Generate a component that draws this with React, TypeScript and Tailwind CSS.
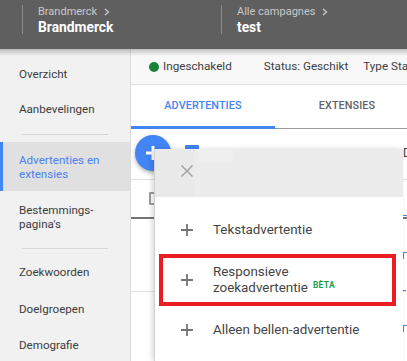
import React from "react";

const Plus = () => (
  <svg width="12" height="12" viewBox="0 0 12 12" className="shrink-0">
    <path d="M6 0V12M0 6H12" stroke="#757575" strokeWidth="1.8" />
  </svg>
);

const NavItem = ({ children, h }: { children: React.ReactNode; h: string }) => (
  <div className={`flex items-center pl-[19px] text-[11.6px] leading-[14px] text-[#3c3c3c] ${h}`}>{children}</div>
);

export default function App() {
  return (
    <div className="relative w-[407px] h-[361px] overflow-hidden bg-white font-['Roboto',sans-serif]">
      {/* Top header */}
      <div className="flex h-[49px] bg-[#5f5f5f]">
        <div className="mt-[5px] ml-[22px] h-[29px] w-px bg-[#8b8b8b]" />
        <div className="ml-[15px] mt-[5px] flex w-[183px] flex-col">
          <div className="flex items-center gap-[7px] text-[11px] leading-[13px] text-[#c9c9c9]">
            Brandmerck
            <svg width="6" height="8" viewBox="0 0 6 8"><path d="M1 1L4.5 4L1 7" stroke="#c9c9c9" strokeWidth="1.3" fill="none" /></svg>
          </div>
          <div className="mt-[1px] text-[13.8px] font-bold leading-[17px] text-white">Brandmerck</div>
        </div>
        <div className="mt-[5px] h-[29px] w-px bg-[#8b8b8b]" />
        <div className="ml-[15px] mt-[5px] flex flex-col">
          <div className="flex items-center gap-[7px] text-[11px] leading-[13px] text-[#c9c9c9]">
            Alle campagnes
            <svg width="6" height="8" viewBox="0 0 6 8"><path d="M1 1L4.5 4L1 7" stroke="#c9c9c9" strokeWidth="1.3" fill="none" /></svg>
          </div>
          <div className="mt-[1px] text-[13.8px] font-bold leading-[17px] text-white">test</div>
        </div>
      </div>

      <div className="flex h-[312px]">
        {/* Sidebar */}
        <div className="w-[131px] shrink-0 border-r border-[#dcdcdc] bg-[#f1f1f1] pt-[7px]">
          <NavItem h="h-[35px]">Overzicht</NavItem>
          <NavItem h="h-[35px]">Aanbevelingen</NavItem>
          <div className="ml-[22px] mt-[8px] h-px w-[86px] bg-[#d6d6d6]" />
          <div className="mt-[7px] flex h-[49px] items-center bg-[#e0e0e0]">
            <div className="h-full w-[3px] bg-[#4285f4]" />
            <div className="pl-[16px] text-[11.6px] leading-[14px] text-[#4a80f0]">
              Advertenties en
              <br />
              extensies
            </div>
          </div>
          <NavItem h="h-[51px]">
            <span>
              Bestemmings-
              <br />
              pagina's
            </span>
          </NavItem>
          <div className="ml-[22px] mt-[6px] h-px w-[86px] bg-[#d6d6d6]" />
          <div className="mt-[5px]" />
          <NavItem h="h-[36px]">Zoekwoorden</NavItem>
          <NavItem h="h-[37px]">Doelgroepen</NavItem>
          <NavItem h="h-[36px]">Demografie</NavItem>
        </div>

        {/* Main */}
        <div className="flex min-w-0 flex-1 flex-col overflow-hidden">
          <div className="flex h-[36px] shrink-0 items-center whitespace-nowrap border-b border-[#e0e0e0] bg-[#f8f8f8] text-[11.7px] text-[#3c4043]">
            <div className="ml-[18px] h-[10px] w-[10px] shrink-0 rounded-full bg-[#188038]" />
            <span className="ml-[4px] shrink-0">Ingeschakeld</span>
            <span className="ml-[32px] shrink-0">Status: Geschikt</span>
            <span className="ml-[15px] shrink-0">Type Status</span>
          </div>
          <div className="relative flex h-[44px] shrink-0 border-b border-[#9a9a9a] text-[10.8px] font-medium tracking-[0.1px]">
            <div className="relative flex w-[144px] shrink-0 items-center justify-center text-[#4285f4]">
              ADVERTENTIES
              <div className="absolute bottom-[-1px] left-0 h-[3px] w-full bg-[#4285f4]" />
            </div>
            <div className="flex w-[144px] shrink-0 items-center justify-center text-[#5f6368]">EXTENSIES</div>
          </div>
          {/* toolbar */}
          <div className="flex h-[51px] shrink-0 items-start whitespace-nowrap border-b border-[#e0e0e0]">
            <div className="ml-[4px] mt-[6px] flex h-[36px] w-[36px] shrink-0 items-center justify-center rounded-full bg-[#4285f4] shadow-[0_2px_4px_rgba(0,0,0,0.3)]">
              <svg width="14" height="14" viewBox="0 0 14 14"><path d="M7 0V14M0 7H14" stroke="white" strokeWidth="3" /></svg>
            </div>
            <div className="ml-[14px] mt-[16px] h-[14px] w-[14px] shrink-0 rounded-[1px] bg-[#4285f4]" />
            <span className="ml-[204px] mt-[15px] shrink-0 text-[12px] text-[#3c4043]">Do</span>
          </div>
          {/* table header */}
          <div className="flex h-[39px] shrink-0 items-start border-b-2 border-[#757575]">
            <div className="ml-[18px] mt-[12px] h-[13px] w-[11px] shrink-0 rounded-[1px] border-2 border-[#9e9e9e]" />
            <div className="ml-[243px] mt-[35px] h-px w-[4px] shrink-0 bg-[#4285f4]" />
          </div>
          <div className="flex h-[73px] shrink-0 items-start border-b border-[#e0e0e0]">
            <div className="ml-[272px] mt-[33px] h-[7px] w-[4px] shrink-0 border-l border-t border-[#4285f4]" />
            <div className="ml-[-5px] mt-[71px] h-px w-[4px] shrink-0 bg-[#4285f4]" />
          </div>
          <div className="flex flex-1 items-start">
            <div className="ml-[272px] mt-[33px] h-[7px] w-[4px] shrink-0 border-l border-t border-[#4285f4]" />
          </div>
        </div>
      </div>

      {/* header shadow */}
      <div className="pointer-events-none absolute left-0 top-[49px] h-[7px] w-full bg-gradient-to-b from-[rgba(0,0,0,0.22)] to-transparent" />

      {/* Popup */}
      <div className="absolute left-[154px] top-[149px] flex h-[212px] w-[249px] flex-col border-l border-[#d2d2d2] bg-white shadow-[-2px_0_5px_rgba(0,0,0,0.15)]">
        <div className="relative flex h-[48px] shrink-0 bg-[#ececec]">
          <div className="h-full w-[39px] bg-[#e9e9e9]" />
          <div className="ml-[4px] h-[13px] w-[35px] bg-[#efefef]" />
          <svg className="absolute left-[26px] top-[16px]" width="12" height="12" viewBox="0 0 12 12">
            <path d="M0.5 0.5L11.5 11.5M11.5 0.5L0.5 11.5" stroke="#9e9e9e" strokeWidth="1.4" />
          </svg>
        </div>
        <div className="mt-[14px] flex h-[38px] items-center pl-[26px] text-[13.4px] text-[#444]">
          <Plus />
          <span className="ml-[20px]">Tekstadvertentie</span>
        </div>
        <div className="ml-[4px] mt-[5px] flex h-[52px] w-[237px] items-center border-[4px] border-[#ec1c24] pl-[18px] text-[13.4px] leading-[16px] text-[#444]">
          <Plus />
          <div className="ml-[20px]">
            Responsieve
            <br />
            zoekadvertentie
            <span className="relative top-[-4px] ml-[5px] text-[8.5px] font-bold tracking-[0.3px] text-[#1e9e4c]">BÈTA</span>
          </div>
        </div>
        <div className="mt-[5px] flex h-[38px] items-center pl-[26px] text-[13.4px] text-[#444]">
          <Plus />
          <span className="ml-[20px]">Alleen bellen-advertentie</span>
        </div>
      </div>
    </div>
  );
}
